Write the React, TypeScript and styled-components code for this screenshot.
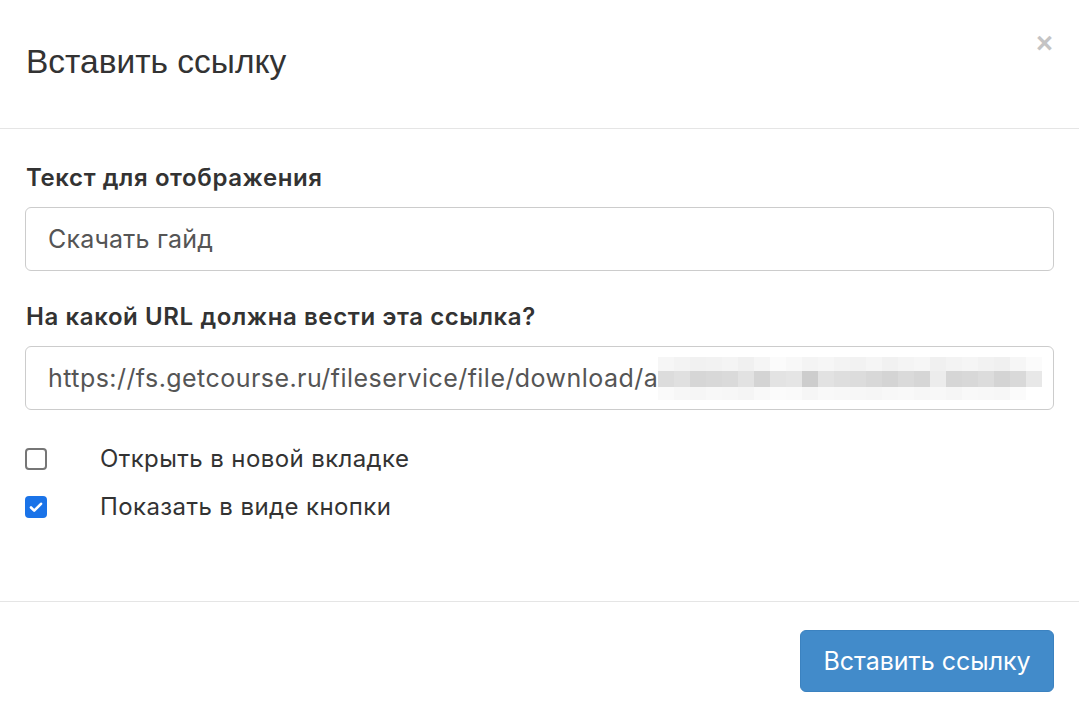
import React from "react";
import styled, { createGlobalStyle } from "styled-components";

const Global = createGlobalStyle`
  html, body { margin: 0; padding: 0; background: #fff; }
  body { font-family: Inter, "Noto Sans", sans-serif; color: #333; }
  * { box-sizing: border-box; }
`;

const Modal = styled.div`
  width: 1079px;
  height: 718px;
  display: flex;
  flex-direction: column;
  background: #fff;
  overflow: hidden;
`;

const Header = styled.div`
  height: 129px;
  border-bottom: 1px solid #e5e5e5;
  padding: 0 26px;
  display: flex;
  align-items: center;
  position: relative;
`;

const Title = styled.h4`
  margin: 0;
  font-family: "Liberation Sans", Arial, sans-serif;
  font-weight: 400;
  font-size: 33.5px;
  color: #333;
  line-height: 1.1;
  padding-bottom: 4px;
`;

const Close = styled.button`
  position: absolute;
  top: 28px;
  right: 26px;
  border: 0;
  background: none;
  padding: 0;
  font-family: "Liberation Sans", Arial, sans-serif;
  font-size: 29px;
  font-weight: 700;
  line-height: 30px;
  color: #c4c4c4;
  cursor: pointer;
`;

const Body = styled.div`
  flex: 1;
  padding: 32px 25px 0 25px;
  display: flex;
  flex-direction: column;
  border-bottom: 1px solid #e5e5e5;
`;

const Field = styled.div`
  display: flex;
  flex-direction: column;
  margin-bottom: 29px;
`;

const Label = styled.label`
  font-size: 24px;
  font-weight: 600;
  color: #333;
  line-height: 34px;
  padding-left: 1px;
  margin-bottom: 12px;
  letter-spacing: 0.6px;
`;

const Input = styled.div`
  height: 64px;
  border: 1px solid #ccc;
  border-radius: 6px;
  padding: 0 22px;
  display: flex;
  align-items: center;
  font-size: 25px;
  color: #555;
  white-space: nowrap;
  overflow: hidden;
`;

const InputText = styled.span<{ $spacing: number }>`
  letter-spacing: ${(p) => p.$spacing}px;
`;

const Blur = styled.div`
  display: grid;
  grid-template-columns: repeat(24, 16px);
  grid-template-rows: 14px 16px 13px;
  flex: none;
`;

const Cell = styled.div<{ $c: string }>`
  background: ${(p) => p.$c};
`;

const Checks = styled.div`
  display: flex;
  flex-direction: column;
  gap: 26px;
  margin-top: 9px;
`;

const CheckRow = styled.label`
  display: flex;
  align-items: center;
  font-size: 24px;
  color: #333;
  line-height: 22px;
  letter-spacing: 0.4px;
`;

const Box = styled.span<{ $checked?: boolean }>`
  width: 22px;
  height: 22px;
  border-radius: 4px;
  border: ${(p) => (p.$checked ? "none" : "2px solid #767676")};
  background: ${(p) => (p.$checked ? "#1a73e8" : "#fff")};
  display: flex;
  align-items: center;
  justify-content: center;
  margin-right: 53px;
  flex: none;
`;

const Footer = styled.div`
  height: 116px;
  display: flex;
  align-items: flex-start;
  justify-content: flex-end;
  padding: 28px 25px 0 0;
`;

const Button = styled.button`
  width: 254px;
  height: 62px;
  background: #428bca;
  border: 1px solid #3b82c0;
  border-radius: 6px;
  color: #fff;
  font-family: Inter, "Noto Sans", sans-serif;
  font-size: 25px;
  font-weight: 400;
  letter-spacing: 0px;
  cursor: pointer;
`;

const top = ["#f6f6f6","#f3f3f3","#f1f1f1","#f2f2f2","#f4f4f4","#f0f0f0","#f5f5f5","#fbfbfb","#f8f8f8","#f4f4f4","#f6f6f6","#f3f3f3","#f2f2f2","#f5f5f5","#f1f1f1","#f4f4f4","#f6f6f6","#f0f0f0","#f3f3f3","#f5f5f5","#f2f2f2","#f0f0f0","#f6f6f6","#fbfbfb"];
const mid = ["#dcdcdc","#e0e0e0","#d6d6d6","#d8d8d8","#dadada","#e2e2e2","#d4d4d4","#e3e3e3","#e5e5e5","#cdcdcd","#e2e2e2","#dedede","#dcdcdc","#d8d8d8","#d4d4d4","#dadada","#d6d6d6","#ececec","#d6d6d6","#d8d8d8","#dcdcdc","#d4d4d4","#d9d9d9","#e8e8e8"];
const bot = ["#fafafa","#f7f7f7","#f6f6f6","#f8f8f8","#f7f7f7","#f5f5f5","#f9f9f9","#fbfbfb","#fafafa","#f6f6f6","#f9f9f9","#f8f8f8","#f7f7f7","#f6f6f6","#f8f8f8","#f9f9f9","#f7f7f7","#f8f8f8","#f6f6f6","#f9f9f9","#f8f8f8","#f7f7f7","#fbfbfb","#ffffff"];

export default function App() {
  return (
    <>
      <Global />
      <Modal>
        <Header>
          <Title>Вставить ссылку</Title>
          <Close aria-label="Закрыть">×</Close>
        </Header>
        <Body>
          <Field>
            <Label>Текст для отображения</Label>
            <Input>
              <InputText $spacing={0.2}>Скачать гайд</InputText>
            </Input>
          </Field>
          <Field>
            <Label>На какой URL должна вести эта ссылка?</Label>
            <Input>
              <InputText $spacing={0.45}>https://fs.getcourse.ru/fileservice/file/download/a</InputText>
              <Blur>
                {[top, mid, bot].map((row, r) =>
                  row.map((c, i) => <Cell key={r + "-" + i} $c={c} />)
                )}
              </Blur>
            </Input>
          </Field>
          <Checks>
            <CheckRow>
              <Box />
              Открыть в новой вкладке
            </CheckRow>
            <CheckRow>
              <Box $checked>
                <svg width="16" height="16" viewBox="0 0 16 16">
                  <path d="M3 8.5l3.2 3.2L13 4.8" fill="none" stroke="#fff" strokeWidth="2.6" strokeLinecap="round" strokeLinejoin="round" />
                </svg>
              </Box>
              Показать в виде кнопки
            </CheckRow>
          </Checks>
        </Body>
        <Footer>
          <Button>Вставить ссылку</Button>
        </Footer>
      </Modal>
    </>
  );
}
